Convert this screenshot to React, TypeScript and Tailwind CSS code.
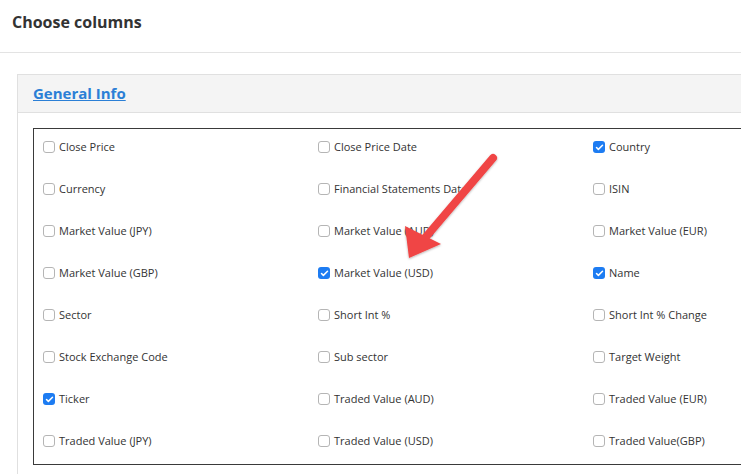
import { Check } from 'lucide-react'

interface Column {
  label: string
  checked?: boolean
}

const COLUMNS: Column[] = [
  { label: 'Close Price' },
  { label: 'Close Price Date' },
  { label: 'Country', checked: true },
  { label: 'Currency' },
  { label: 'Financial Statements Date' },
  { label: 'ISIN' },
  { label: 'Market Value (JPY)' },
  { label: 'Market Value (AUD)' },
  { label: 'Market Value (EUR)' },
  { label: 'Market Value (GBP)' },
  { label: 'Market Value (USD)', checked: true },
  { label: 'Name', checked: true },
  { label: 'Sector' },
  { label: 'Short Int %' },
  { label: 'Short Int % Change' },
  { label: 'Stock Exchange Code' },
  { label: 'Sub sector' },
  { label: 'Target Weight' },
  { label: 'Ticker', checked: true },
  { label: 'Traded Value (AUD)' },
  { label: 'Traded Value (EUR)' },
  { label: 'Traded Value (JPY)' },
  { label: 'Traded Value (USD)' },
  { label: 'Traded Value(GBP)' },
]

function ColumnCheckbox({ label, checked }: Column) {
  return (
    <label className="flex h-[22px] items-center gap-[4px] text-[11px] text-[#333]">
      {checked ? (
        <span className="flex h-[12px] w-[12px] items-center justify-center rounded-[3px] bg-[#1d7cf2]">
          <Check className="h-[9px] w-[9px] text-white" strokeWidth={4} />
        </span>
      ) : (
        <span className="h-[12px] w-[12px] rounded-[3px] border border-[#b5b5b5] bg-white" />
      )}
      <span className="whitespace-nowrap">{label}</span>
    </label>
  )
}

function RedArrow() {
  return (
    <svg
      className="pointer-events-none absolute left-[396px] top-[148px]"
      width="110"
      height="120"
      viewBox="396 148 110 120"
    >
      <defs>
        <filter id="shadow" x="-20%" y="-20%" width="140%" height="140%">
          <feDropShadow dx="0" dy="1" stdDeviation="1.2" floodColor="#000" floodOpacity="0.3" />
        </filter>
      </defs>
      <g filter="url(#shadow)" fill="#f04444">
        <line x1="493" y1="158" x2="425" y2="238" stroke="#f04444" strokeWidth="8" strokeLinecap="round" />
        <polygon points="409,258 405,226 441,244" />
      </g>
    </svg>
  )
}

export default function App() {
  return (
    <div
      className="relative h-[474px] w-[741px] overflow-hidden bg-white"
      style={{ fontFamily: '"Open Sans", "Liberation Sans", sans-serif' }}
    >
      <div className="flex h-[53px] items-center border-b border-[#e3e3e3] px-[12px] pb-[8px]">
        <h1 className="text-[16px] font-bold text-[#333]">Choose columns</h1>
      </div>

      <div className="pl-[17px] pt-[21px]">
        <div className="w-[760px] border border-[#e0e0e0]">
          <div className="flex h-[38px] items-center border-b border-[#e0e0e0] bg-[#f4f4f4] px-[15px]">
            <a href="#" className="text-[15px] font-bold text-[#2b7fd6] underline">
              General Info
            </a>
          </div>
          <div className="p-[15px]">
            <div className="border border-[#3a3a3a] pb-[12px] pl-[9px] pt-[7px]">
              <div className="grid grid-cols-[275px_275px_275px] gap-y-[20px]">
                {COLUMNS.map((col) => (
                  <ColumnCheckbox key={col.label} {...col} />
                ))}
              </div>
            </div>
          </div>
        </div>
      </div>

      <RedArrow />
    </div>
  )
}
